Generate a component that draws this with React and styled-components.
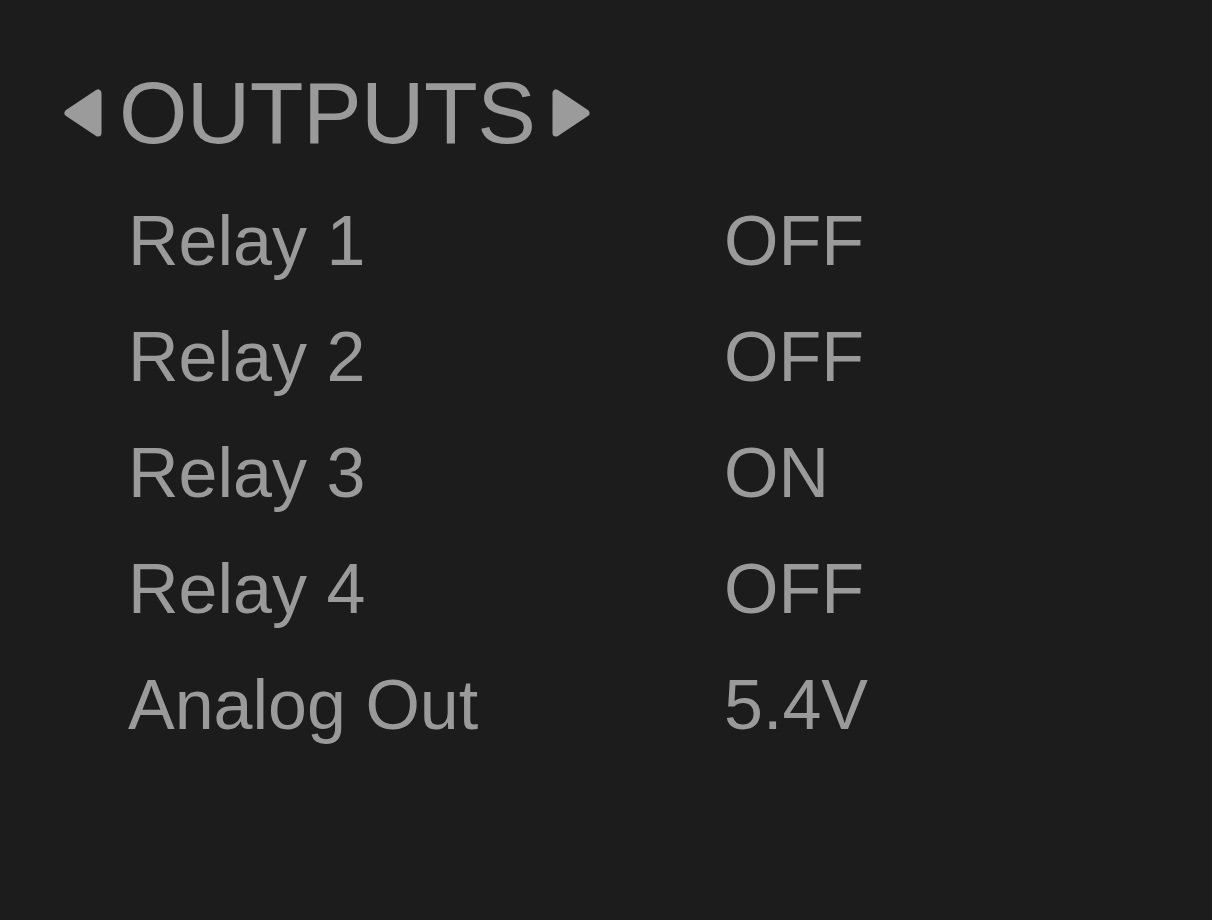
import styled, { createGlobalStyle } from "styled-components";

const GlobalStyle = createGlobalStyle`
  html, body {
    margin: 0;
    padding: 0;
    background: #1c1c1c;
  }
`;

const outputs = [
  { id: 1, nome: "Relay 1", valor: "OFF" },
  { id: 2, nome: "Relay 2", valor: "OFF" },
  { id: 3, nome: "Relay 3", valor: "ON" },
  { id: 4, nome: "Relay 4", valor: "OFF" },
  { id: 5, nome: "Analog Out", valor: "5.4V" },
];

function Seta({ direcao }) {
  const pontos = direcao === "esquerda" ? "34,4 34,44 4,24" : "4,4 4,44 34,24";
  return (
    <svg width="38" height="48" viewBox="0 0 38 48">
      <polygon
        points={pontos}
        fill="#9b9b9b"
        stroke="#9b9b9b"
        strokeWidth="7"
        strokeLinejoin="round"
      />
    </svg>
  );
}

export default function App() {
  return (
    <>
      <GlobalStyle />
      <Tela>
        <Cabecalho>
          <Seta direcao="esquerda" />
          <Titulo>OUTPUTS</Titulo>
          <Seta direcao="direita" />
        </Cabecalho>
        <Lista>
          {outputs.map((item) => (
            <Linha key={item.id}>
              <Nome>{item.nome}</Nome>
              <Valor>{item.valor}</Valor>
            </Linha>
          ))}
        </Lista>
      </Tela>
    </>
  );
}

const Tela = styled.div`
  min-height: 100vh;
  box-sizing: border-box;
  padding: 69px 0 0 64px;
  background: #1c1c1c;
  font-family: "Liberation Sans", Arial, Helvetica, sans-serif;
  color: #9a9a9a;
`;

const Cabecalho = styled.div`
  display: flex;
  align-items: center;
  gap: 17px;
  height: 88px;
`;

const Titulo = styled.h1`
  margin: 0;
  font-size: 88px;
  line-height: 88px;
  font-weight: 400;
  letter-spacing: -0.6px;
  color: #9a9a9a;
`;

const Lista = styled.div`
  margin-top: 26px;
  padding-left: 64px;
  display: flex;
  flex-direction: column;
`;

const Linha = styled.div`
  display: grid;
  grid-template-columns: 596px auto;
  height: 116px;
  align-items: center;
  font-size: 70px;
  line-height: 116px;
`;

const Nome = styled.span``;

const Valor = styled.span``;
